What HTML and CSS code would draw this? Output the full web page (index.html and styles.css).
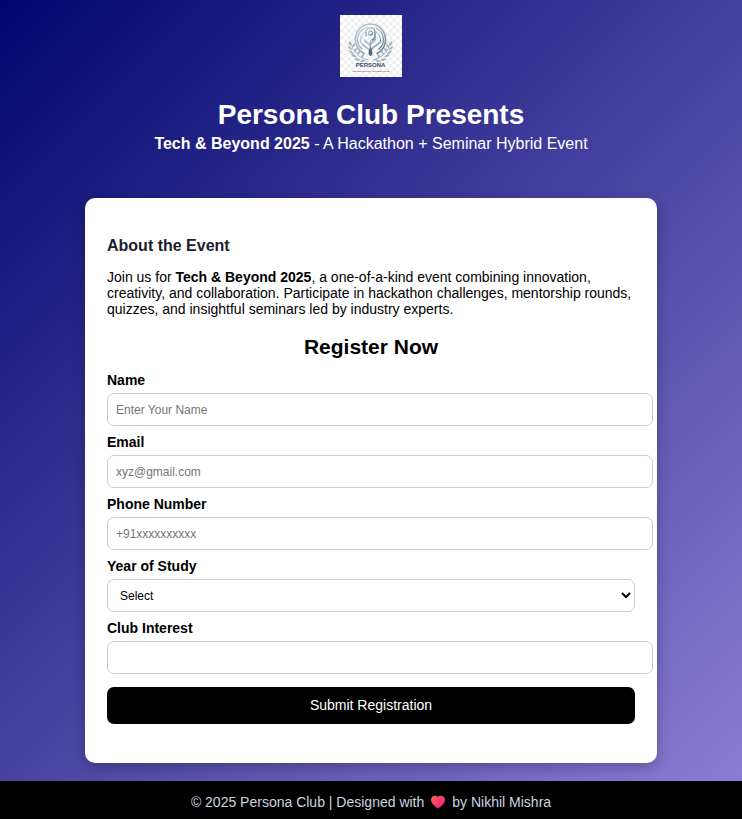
FILE: index.html
```html
<!DOCTYPE html>
<html lang="en">
<head>
<meta charset="utf-8">
<meta name="viewport" content="width=device-width, initial-scale=1">
<title>Persona Club - Tech &amp; Beyond 2025</title>
<link rel="stylesheet" href="styles.css">
</head>
<body>
<header class="header">
  <svg class="logo" viewBox="0 0 62 62" role="img" aria-label="Persona club logo">
    <defs>
      <pattern id="checks" width="7" height="7" patternUnits="userSpaceOnUse">
        <rect width="7" height="7" fill="#fff"/>
        <path d="M0 0h3.500v3.500H0zM3.500 3.500H7V7H3.500z" fill="#eeeeef"/>
      </pattern>
      <linearGradient id="steel" x1="0" y1="0" x2="1" y2="1">
        <stop offset="0" stop-color="#b9cbd5"/>
        <stop offset=".5" stop-color="#9db3bf"/>
        <stop offset="1" stop-color="#627d92"/>
      </linearGradient>
    </defs>
    <rect width="62" height="62" fill="url(#checks)"/>
    <g fill="none" stroke="url(#steel)" stroke-linecap="round">
      <path d="M24 38.500A15 15.500 0 1 1 37 38.500" stroke-width="1.600"/>
      <path d="M22 34A12.500 12.500 0 0 1 25 13M36 13a12.500 12.500 0 0 1 3 21" stroke-width="1.300"/>
      <path d="M21 28a10 10 0 0 1 4-11M40 28a10 10 0 0 0-4-11" stroke-width="1"/>
      <path d="M26 21v-3c0-7 9-7 9 0v3q0 3-3 4" stroke-width="1.600"/>
      <circle cx="30.500" cy="18" r="2" stroke-width="1.400"/>
      <path d="M30.500 37V26M30.500 31c-1-3-5-3-6-6M30.500 30c1-3 4-3 5-6M30 36c-2-4-6-4-8-7M31 35c2-4 6-4 8-7" stroke-width="1.600"/>
      <path d="M11 27c1 9 6 15 17 18M50 27c-1 9-6 15-17 18" stroke-width=".8"/>
    </g>
    <path d="M30.500 32c-2 4-3 8 0 9 3-1 2-5 0-9z" fill="#4d687e"/>
    <g fill="#a3b3bf">
      <path d="M11 31q-3-2-2-5 3 2 2 5zM12 35q-4-1-4-4 4 1 4 4zM14 39q-4 0-5-4 4 1 5 4zM17 42q-4 1-6-3 4 0 6 3zM21 45q-4 2-7-1 4-2 7 1zM12 33q0-4 3-5 0 4-3 5zM14 37q0-4 3-4 0 3-3 4zM17 40q0-4 3-4 0 3-3 4zM21 43q0-4 3-4 0 3-3 4zM26 45q-3 3-6 2 2-3 6-2z"/>
      <path d="M50 31q3-2 2-5-3 2-2 5zM49 35q4-1 4-4-4 1-4 4zM47 39q4 0 5-4-4 1-5 4zM44 42q4 1 6-3-4 0-6 3zM40 45q4 2 7-1-4-2-7 1zM49 33q0-4-3-5 0 4 3 5zM47 37q0-4-3-4 0 3 3 4zM44 40q0-4-3-4 0 3 3 4zM40 43q0-4-3-4 0 3 3 4zM35 45q3 3 6 2-2-3-6-2z"/>
    </g>
    <text class="logo-name" x="30.500" y="52" text-anchor="middle">PERSONA</text>
    <text class="logo-motto" x="30.500" y="56.500" text-anchor="middle">THE PERSONALITY GROOMING CLUB</text>
  </svg>
  <h1 class="title">Persona Club Presents</h1>
  <p class="subtitle"><strong>Tech &amp; Beyond 2025</strong> - A Hackathon + Seminar Hybrid Event</p>
</header>
<main class="card">
  <section>
    <h2 class="about-title">About the Event</h2>
    <p class="about-text">Join us for <strong>Tech &amp; Beyond 2025</strong>, a one-of-a-kind event combining innovation, creativity, and collaboration. Participate in hackathon challenges, mentorship rounds, quizzes, and insightful seminars led by industry experts.</p>
  </section>
  <section>
    <h2 class="form-title">Register Now</h2>
    <form class="form">
      <label class="label" for="name">Name</label>
      <input class="field" id="name" type="text" placeholder="Enter Your Name">
      <label class="label" for="email">Email</label>
      <input class="field" id="email" type="email" placeholder="xyz@gmail.com">
      <label class="label" for="phone">Phone Number</label>
      <input class="field" id="phone" type="tel" placeholder="+91xxxxxxxxxx">
      <label class="label" for="year">Year of Study</label>
      <select class="field select" id="year">
        <option>Select</option>
        <option>1st Year</option>
        <option>2nd Year</option>
        <option>3rd Year</option>
        <option>4th Year</option>
      </select>
      <label class="label" for="interest">Club Interest</label>
      <input class="field" id="interest" type="text">
      <button class="submit" type="submit">Submit Registration</button>
    </form>
  </section>
</main>
<footer class="footer">
  <span>© 2025 Persona Club | Designed with</span>
  <svg class="heart" viewBox="0 0 16 14" role="img" aria-label="love">
    <defs>
      <linearGradient id="love" x1="0" y1="0" x2="1" y2="1">
        <stop offset="0" stop-color="#ff6a5c"/>
        <stop offset=".5" stop-color="#fb3d68"/>
        <stop offset="1" stop-color="#e5169a"/>
      </linearGradient>
    </defs>
    <path d="M8 13.500C4 11 1 8 1 4.500 1 .5 6-.5 8 2 10-.5 15 .5 15 4.500 15 8 12 11 8 13.500z" fill="url(#love)"/>
  </svg>
  <span>by Nikhil Mishra</span>
</footer>
</body>
</html>
```
FILE: styles.css
```css
body {
  display: flex;
  flex-direction: column;
  min-height: 100vh;
  margin: 0;
  font-family: "Liberation Sans", Arial, sans-serif;
  font-size: 14px;
  line-height: 16px;
  color: #000;
  background: linear-gradient(135deg, #00066c, #8f7fd6);
}

.header {
  padding: 15px 16px 0;
  text-align: center;
  color: #fff;
}

.logo {
  display: block;
  width: 62px;
  height: 62px;
  margin: 0 auto 22px;
}

.logo-name {
  font-size: 6px;
  font-weight: bold;
  fill: #3b4a66;
}

.logo-motto {
  font-size: 2px;
  font-weight: bold;
  fill: #4a5a74;
}

.title {
  margin: 0;
  font-size: 28px;
  line-height: 32px;
}

.subtitle {
  margin: 4px 0 0;
  font-size: 16px;
  line-height: 18px;
}

.card {
  box-sizing: border-box;
  width: calc(100% - 32px);
  max-width: 572px;
  margin: 45px auto 17px;
  padding: 39px 22px;
  border-radius: 10px;
  background: #fff;
  box-shadow: 0 4px 14px rgba(0, 0, 0, 0.25);
}

.about-title {
  margin: 0 0 14px;
  font-size: 16px;
  line-height: 18px;
  color: #1a202c;
}

.about-text {
  margin: 0 0 18px;
}

.form-title {
  margin: 0 0 13px;
  font-size: 21px;
  line-height: 24px;
  text-align: center;
}

.label {
  display: block;
  margin-bottom: 5px;
  font-weight: bold;
}

.field {
  display: block;
  width: 100%;
  height: 15px;
  margin: 0 0 8px;
  padding: 8px;
  border: 1px solid #ccc;
  border-radius: 7px;
  background: #fff;
  font-family: inherit;
  font-size: 12px;
  color: #000;
}

.field::placeholder {
  color: #757575;
}

.select {
  box-sizing: border-box;
  height: 33px;
}

.submit {
  display: block;
  width: 100%;
  margin-top: 13px;
  padding: 10px;
  border: 0;
  border-radius: 7px;
  background: #000;
  font-family: inherit;
  font-size: 14px;
  line-height: 17px;
  color: #fff;
}

.footer {
  display: flex;
  justify-content: center;
  align-items: center;
  gap: 6px;
  margin-top: auto;
  padding: 13px 16px 9px;
  background: #000;
  color: #cbd5e0;
}

.heart {
  width: 16px;
  height: 14px;
}
```
